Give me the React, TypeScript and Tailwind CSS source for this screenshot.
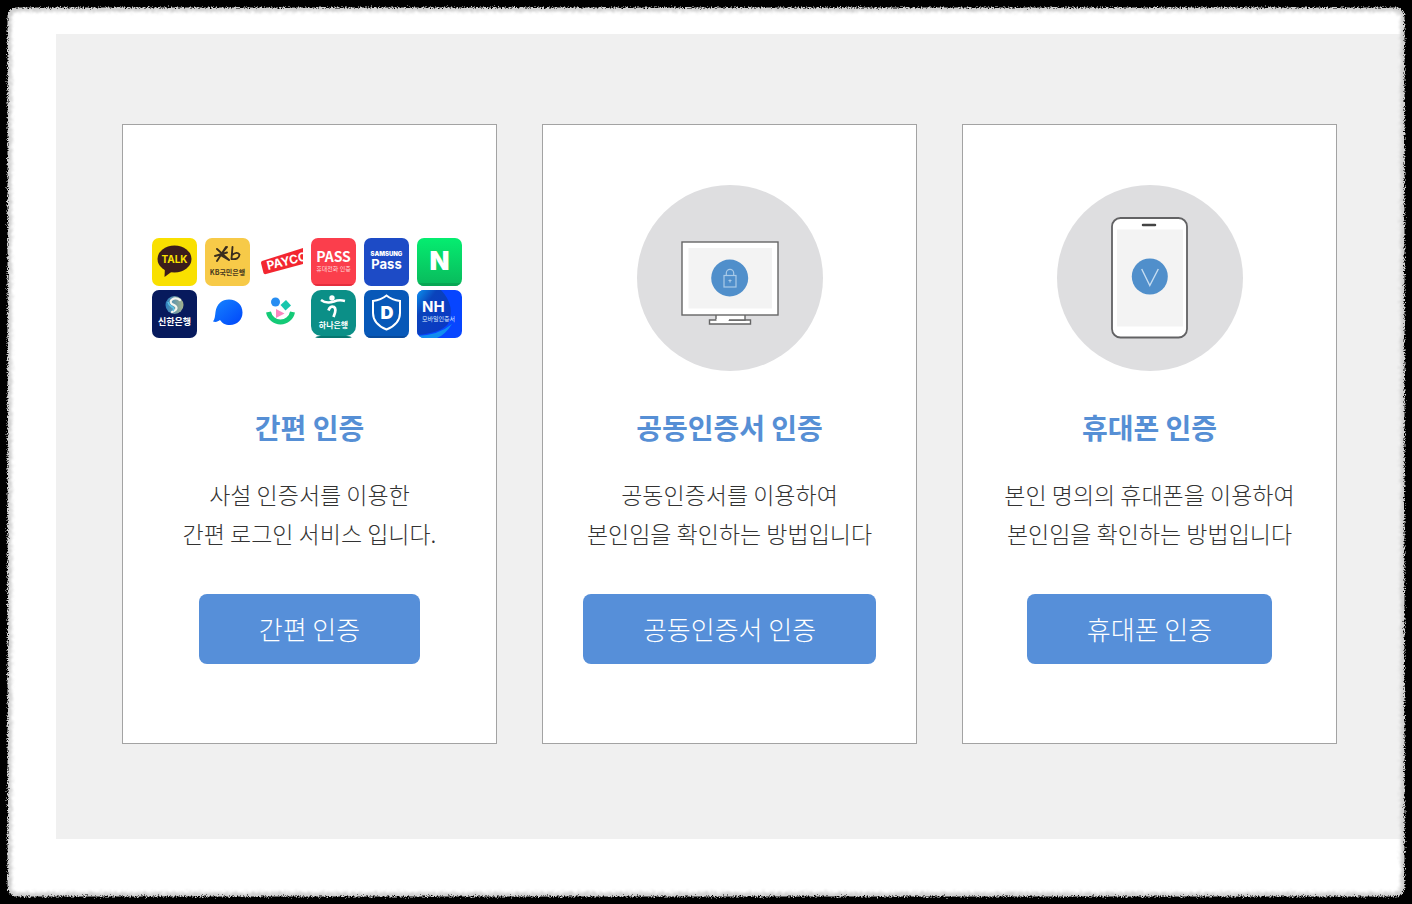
import type { ReactNode } from 'react'

type Method = {
  title: string
  lines: string[]
  picture: ReactNode
}

function Tile({ label, children }: { label: string; children: ReactNode }) {
  return (
    <svg role="img" aria-label={label} viewBox="0 0 45 48" className="h-12 w-[45px] rounded-[7px] font-bold">
      {children}
    </svg>
  )
}

function SimpleAuthLogos() {
  return (
    <div className="grid grid-cols-[repeat(6,45px)] gap-x-2 gap-y-1 pr-1.5">
      <Tile label="카카오톡">
        <rect width="45" height="48" fill="#f9e000" />
        <path d="M13 28 L12.500 39 L22 32 Z" fill="#3b1c1c" />
        <ellipse cx="22.500" cy="21" rx="17" ry="13.500" fill="#3b1c1c" />
        <text x="22.500" y="25" textAnchor="middle" fontSize="10" fill="#f9e000" className="font-[family-name:Inter]">TALK</text>
      </Tile>
      <Tile label="KB 국민은행">
        <rect width="45" height="48" fill="#f7ca48" />
        <path d="M10 18 L22 14.500 M12 11 L24 22 M21 9 L12 23 M22 9 L15.500 17 L24 22 M27.500 9 L26.500 21 M27 17 Q32 13 34.500 16.500 Q34 22 26.500 21" fill="none" stroke="#3a2d1d" strokeWidth="1.900" strokeLinecap="round" />
        <text x="22.500" y="37" textAnchor="middle" fontSize="7" fill="#4a3a20">KB국민은행</text>
      </Tile>
      <Tile label="페이코">
        <rect width="45" height="48" fill="#fff" />
        <path d="M4 23 L45 10 V26 L8 36 Q6 36.500 5.500 35 L3 25 Q3 23.500 4 23 Z" fill="#f32630" />
        <text x="10" y="32" fontSize="12" fill="#fff" transform="rotate(-14 10 32)" className="font-[family-name:Inter]">PAYCO</text>
      </Tile>
      <Tile label="PASS">
        <rect width="45" height="48" fill="#fb3e4c" />
        <rect y="46" width="45" height="2" fill="#e52d3d" />
        <text x="22.500" y="24" textAnchor="middle" fontSize="14" fill="#fff" className="font-['Noto_Sans_CJK_KR']">PASS</text>
        <text x="22.500" y="33" textAnchor="middle" fontSize="6" fill="#ffd5d8" fontWeight="400">휴대전화 인증</text>
      </Tile>
      <Tile label="삼성패스">
        <rect width="45" height="48" fill="#1d4bc6" />
        <text x="22.500" y="18" textAnchor="middle" fontSize="6" fill="#fff" className="font-[family-name:Inter] font-black">SAMSUNG</text>
        <text x="22.500" y="31" textAnchor="middle" fontSize="13" fill="#fff" className="font-[family-name:Inter]">Pass</text>
      </Tile>
      <Tile label="네이버">
        <defs>
          <linearGradient id="naver" x2="0" y2="1">
            <stop stopColor="#05ed70" />
            <stop offset="1" stopColor="#09b95c" />
          </linearGradient>
        </defs>
        <rect width="45" height="48" fill="url(#naver)" />
        <rect y="45" width="45" height="3" fill="#08a653" />
        <text x="22.500" y="32" textAnchor="middle" fontSize="26" fill="#fff" className="font-[family-name:Inter] font-black">N</text>
      </Tile>
      <Tile label="신한은행">
        <defs>
          <linearGradient id="shinhan">
            <stop stopColor="#2c7fc1" />
            <stop offset="1" stopColor="#a6b28d" />
          </linearGradient>
        </defs>
        <rect width="45" height="48" fill="#071a5d" />
        <circle cx="22.500" cy="15" r="9" fill="url(#shinhan)" />
        <path d="M28 10 C22 6 16 11 20 14 C25 16 27 19 20 22" fill="none" stroke="#f4f5ee" strokeWidth="2.200" strokeLinecap="round" />
        <path d="M16 12 C17 18 24 16 21 21" fill="none" stroke="#5ac3e8" strokeWidth="1.500" />
        <text x="22.500" y="35" textAnchor="middle" fontSize="9" fill="#fff">신한은행</text>
      </Tile>
      <Tile label="토스">
        <defs>
          <linearGradient id="toss" x2="1" y2="1">
            <stop stopColor="#1685ff" />
            <stop offset="1" stopColor="#0045fa" />
          </linearGradient>
        </defs>
        <rect width="45" height="48" fill="#fff" />
        <path d="M8 31.500 C10 29 10 26 10.500 22 C11.500 14 17 9.500 24 9.500 C32 9.500 37.500 15 37.500 22.500 C37.500 30 32 35 25 35 C20 35 17 33 15 30 C13 31.500 11 32.500 8 31.500 Z" fill="url(#toss)" />
      </Tile>
      <Tile label="카카오뱅크">
        <rect width="45" height="48" fill="#fff" />
        <path d="M10.500 22 A12.200 12.200 0 0 0 34.500 22" fill="none" stroke="#14ca77" strokeWidth="5" />
        <circle cx="17.500" cy="12" r="4.500" fill="#278df2" />
        <path d="M28 10 L33 15.500 L27.500 20.500 L22.500 15 Z" fill="#19c7ad" />
        <path d="M18 19 L26.500 23.500 L18 28 Z" fill="#fb86bf" />
      </Tile>
      <Tile label="하나은행">
        <rect width="45" height="48" fill="#fff" />
        <rect width="45" height="46" rx="10" fill="#0b8f87" />
        <path d="M4 48 Q5 46 9 46 H36 Q40 46 41 48 Z" fill="#06766f" />
        <circle cx="21" cy="8" r="2.700" fill="#fff" />
        <path d="M10 10 Q15 14 23 11.500 Q28 9.500 34 11" fill="none" stroke="#fff" strokeWidth="2.500" />
        <path d="M17.500 20.500 Q19 15.500 23 17 Q26 19 22.500 27" fill="none" stroke="#fff" strokeWidth="2.800" />
        <text x="22.500" y="38" textAnchor="middle" fontSize="8" fill="#fff">하나은행</text>
      </Tile>
      <Tile label="드림인증">
        <rect width="45" height="48" fill="#0758b8" />
        <rect y="46" width="45" height="2" fill="#084a9b" />
        <path d="M22.500 5.500 Q28 10 36 11 V23 Q36 34 22.500 39.500 Q9 34 9 23 V11 Q17 10 22.500 5.500 Z" fill="none" stroke="#fff" strokeWidth="2" />
        <text x="23" y="29" textAnchor="middle" fontSize="18" fill="#fff" className="font-[family-name:Inter] font-black">D</text>
      </Tile>
      <Tile label="NH 모바일인증서">
        <defs>
          <linearGradient id="nh" x2="1" y2="1">
            <stop stopColor="#0b92ee" />
            <stop offset="0.300" stopColor="#0a43bb" />
            <stop offset="1" stopColor="#0a35c7" />
          </linearGradient>
        </defs>
        <rect width="45" height="48" fill="#0745ff" />
        <path d="M0 0 H24 Q39 16 31 34 Q24 43 0 45 Z" fill="url(#nh)" />
        <path d="M0 48 V46 Q22 45 35 34 Q28 45 20 48 Z" fill="#118df0" />
        <text x="5" y="22" fontSize="15" fill="#fff" className="font-[family-name:Inter]">NH</text>
        <text x="5" y="31" fontSize="6" fill="#dceaff" fontWeight="400">모바일인증서</text>
      </Tile>
    </div>
  )
}

function MonitorPicture() {
  return (
    <svg viewBox="0 0 186 186" className="mb-5 size-[186px]" aria-hidden="true">
      <circle cx="93" cy="93" r="93" fill="#dedee0" />
      <g fill="#fff" stroke="#666" strokeWidth="1.400">
        <path d="M72.500 135 H113.500 V139 H72.500 Z" />
        <path d="M79 129 H108 V135 H79 Z" stroke="none" />
        <path d="M79 135 V129 M92 135 H108 V129" fill="none" />
        <path d="M79.500 134 H91.500 V136.500 H79.500 Z" stroke="none" />
        <rect x="45" y="57" width="96" height="73" />
      </g>
      <rect x="51.500" y="63" width="83.500" height="60.500" fill="#f3f3f3" />
      <circle cx="92.700" cy="93" r="18.500" fill="#508fcb" />
      <g fill="none" stroke="#a9cae8" strokeWidth="1.200">
        <rect x="87" y="90.500" width="12" height="11.500" />
        <path d="M89.300 90.500 V88 A3.600 3.600 0 0 1 96.700 88 V90.500" />
        <path d="M93 94.500 V97.500 M91.500 95.500 H94.500" />
      </g>
    </svg>
  )
}

function PhonePicture() {
  return (
    <svg viewBox="0 0 186 186" className="mb-5 size-[186px]" aria-hidden="true">
      <circle cx="93" cy="93" r="93" fill="#dedee0" />
      <rect x="55" y="33" width="75" height="119.500" rx="8.500" fill="#fff" stroke="#626264" strokeWidth="1.800" />
      <rect x="60" y="44.500" width="66" height="97" fill="#f3f3f3" />
      <path d="M86 40 H98" stroke="#444" strokeWidth="2.500" strokeLinecap="round" />
      <circle cx="92.800" cy="91.500" r="18" fill="#508fcb" />
      <path d="M84.700 84 L92.800 100.500 L101.300 84" fill="none" stroke="#c6ddf1" strokeWidth="1.400" />
    </svg>
  )
}

// torn paper edge around the whole page
function RoughFrame() {
  return (
    <svg className="pointer-events-none absolute inset-0 size-full overflow-hidden" aria-hidden="true">
      <defs>
        <filter id="soft" x="-5%" y="-5%" width="110%" height="110%">
          <feTurbulence type="fractalNoise" baseFrequency="0.600" numOctaves="3" seed="4" result="noise" />
          <feDisplacementMap in="SourceGraphic" in2="noise" scale="9" xChannelSelector="R" yChannelSelector="G" />
          <feGaussianBlur stdDeviation="0.800" />
        </filter>
        <filter id="rough" x="-5%" y="-5%" width="110%" height="110%">
          <feTurbulence type="fractalNoise" baseFrequency="0.700" numOctaves="3" seed="9" result="noise" />
          <feDisplacementMap in="SourceGraphic" in2="noise" scale="6" xChannelSelector="R" yChannelSelector="G" />
          <feGaussianBlur stdDeviation="0.300" />
        </filter>
      </defs>
      <rect x="-10" y="-10" rx="28" className="h-[calc(100%+20px)] w-[calc(100%+20px)]" fill="none" stroke="#cfcfcf" strokeWidth="43" filter="url(#soft)" />
      <rect x="-10" y="-10" rx="26" className="h-[calc(100%+20px)] w-[calc(100%+20px)]" fill="none" stroke="#000" strokeWidth="35" filter="url(#rough)" />
    </svg>
  )
}

const methods: Method[] = [
  {
    title: '간편 인증',
    lines: ['사설 인증서를 이용한', '간편 로그인 서비스 입니다.'],
    picture: <SimpleAuthLogos />,
  },
  {
    title: '공동인증서 인증',
    lines: ['공동인증서를 이용하여', '본인임을 확인하는 방법입니다'],
    picture: <MonitorPicture />,
  },
  {
    title: '휴대폰 인증',
    lines: ['본인 명의의 휴대폰을 이용하여', '본인임을 확인하는 방법입니다'],
    picture: <PhonePicture />,
  },
]

function MethodCard({ title, lines, picture }: Method) {
  return (
    <section className="flex min-w-0 flex-1 flex-col items-center border border-[#a3a3a3] bg-white pt-[60px] pb-[79px]">
      <div className="flex h-[206px] items-center">{picture}</div>
      <h2 className="mt-4 text-[28px] leading-10 font-bold text-[#568fd5]">{title}</h2>
      <p className="mt-7 text-center text-[23px] leading-[39px] font-light whitespace-nowrap text-[#333]">
        {lines.map((line) => (
          <span key={line} className="block">{line}</span>
        ))}
      </p>
      <button type="button" className="mt-[41px] h-[70px] rounded-lg bg-[#568fd9] px-[60px] pb-0.5 text-[26px] font-light whitespace-nowrap text-white">
        {title}
      </button>
    </section>
  )
}

export default function App() {
  return (
    <div className="relative min-h-screen bg-white pt-[34px] pr-2 pb-[65px] pl-14 font-['Noto_Sans_CJK_KR',sans-serif]">
      <main className="flex gap-[45px] bg-[#f0f0f0] pt-[90px] pr-[67px] pb-[95px] pl-[66px]">
        {methods.map((method) => (
          <MethodCard key={method.title} {...method} />
        ))}
      </main>
      <RoughFrame />
    </div>
  )
}
